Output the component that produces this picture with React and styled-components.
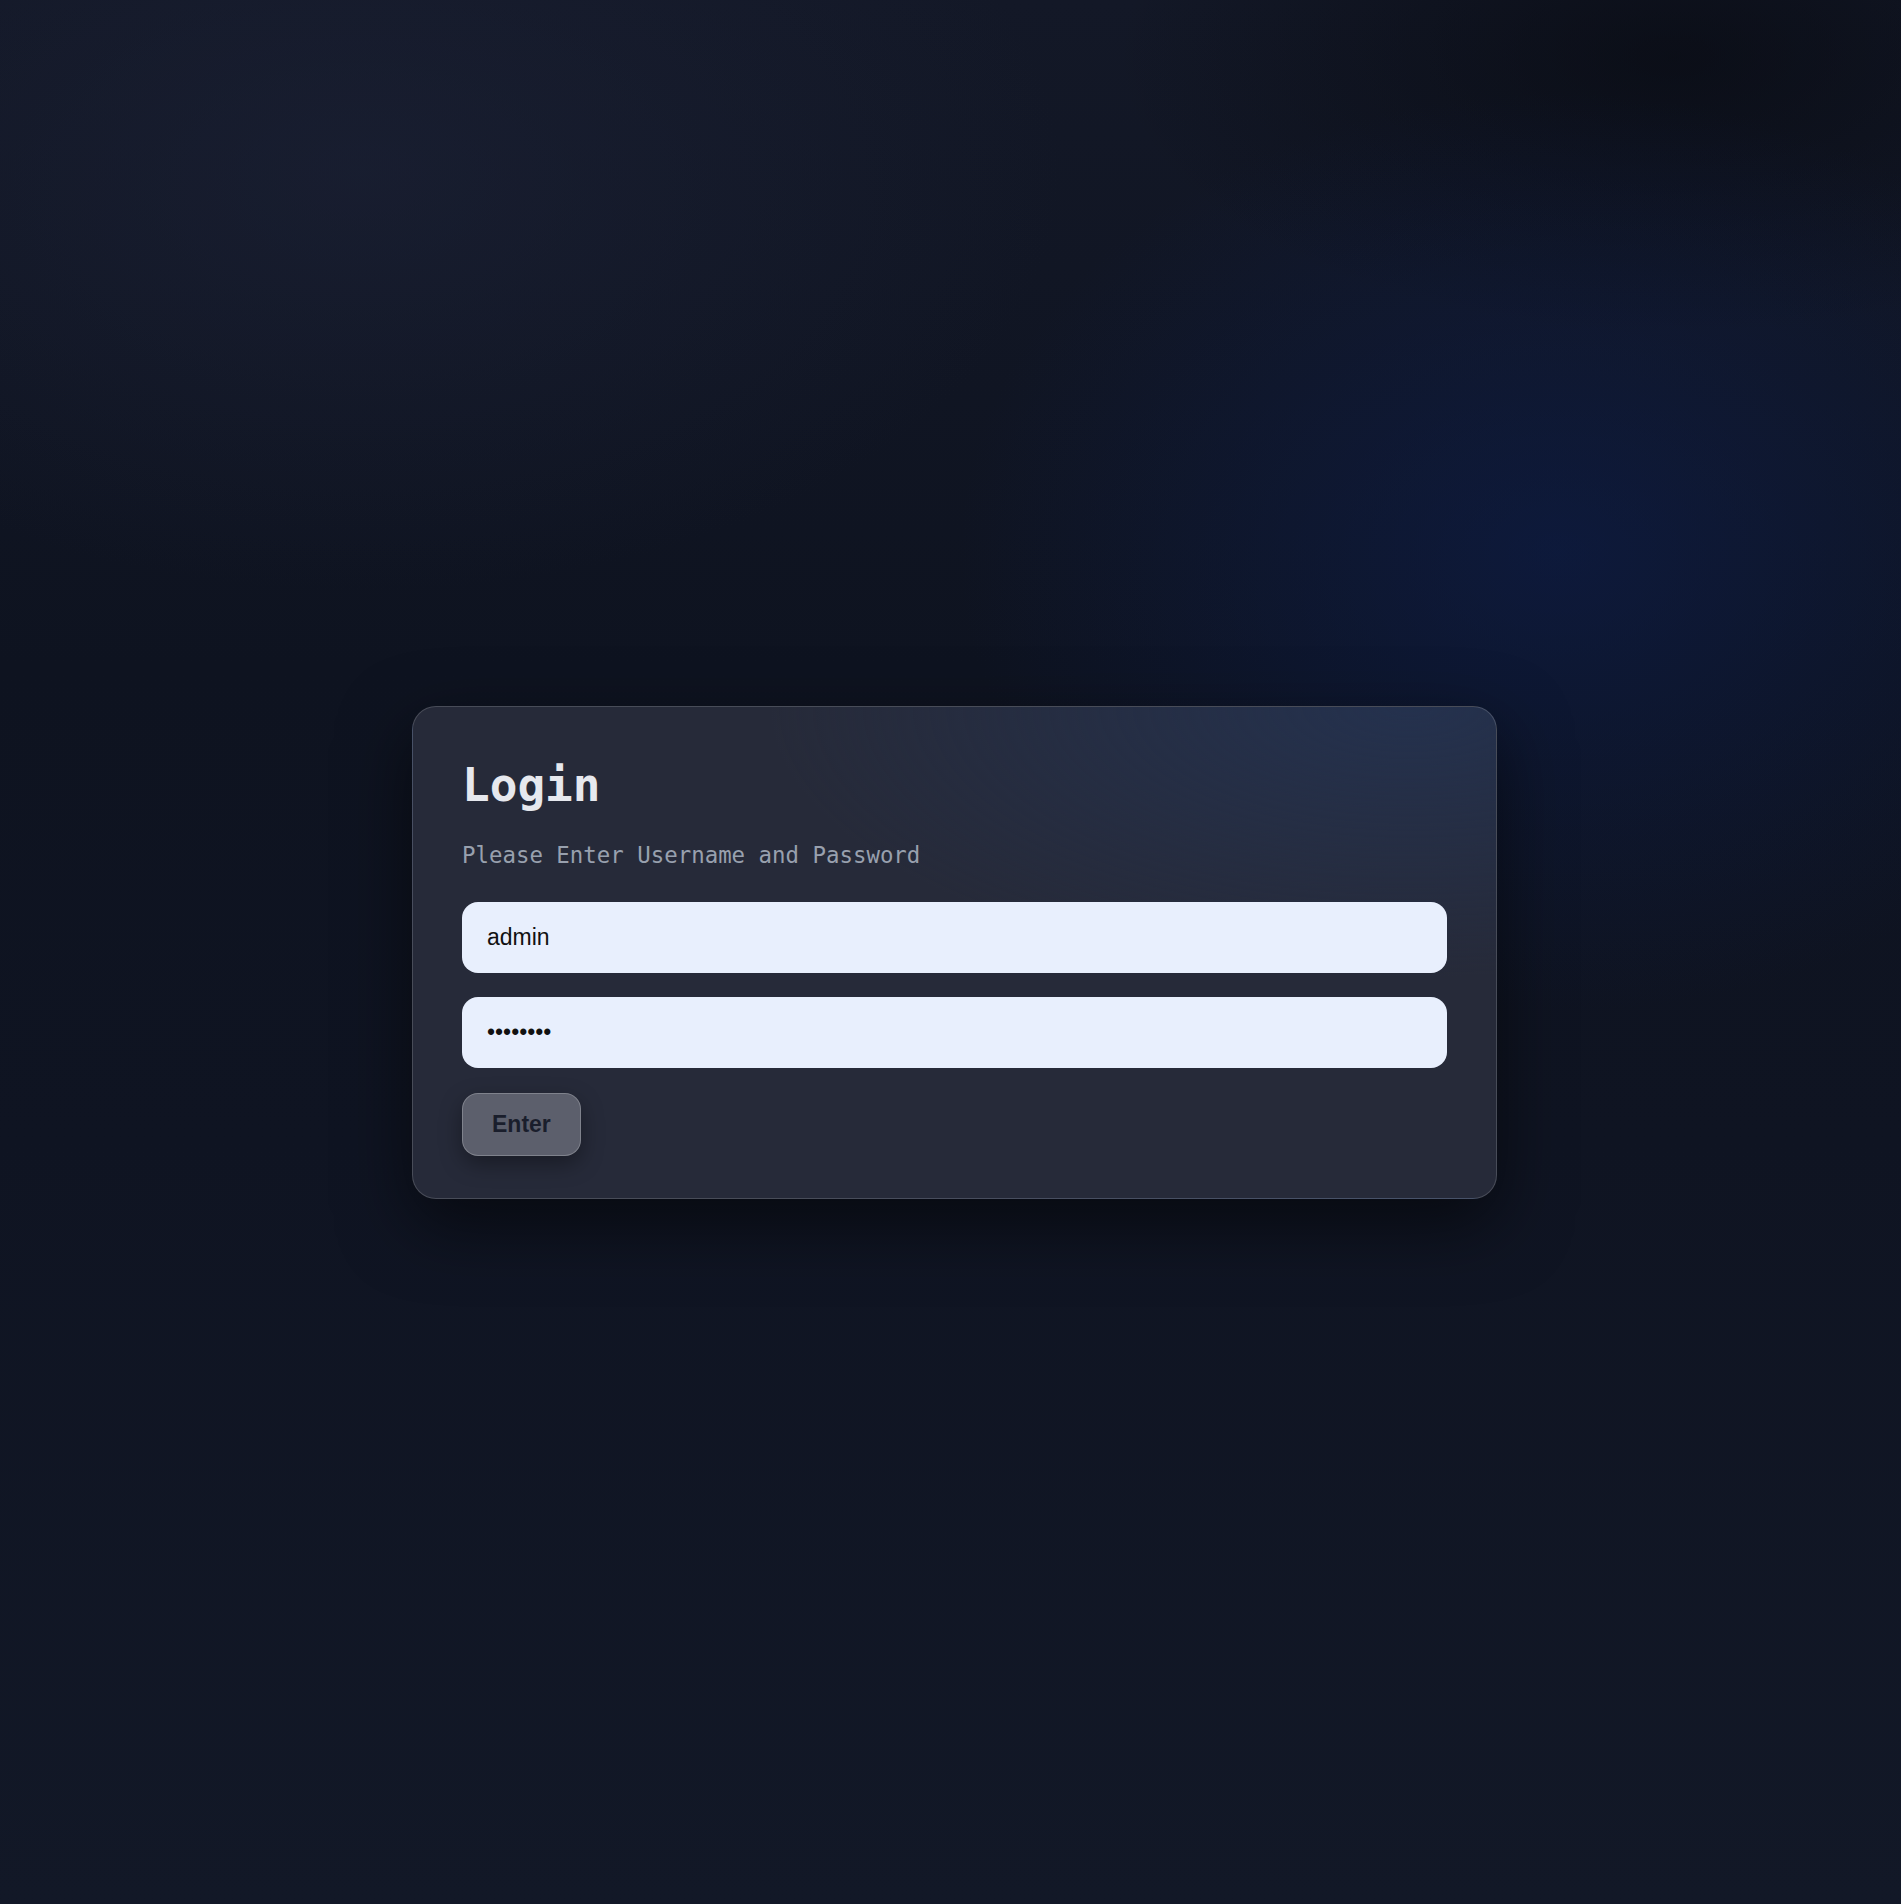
import React from "react";
import styled, { createGlobalStyle } from "styled-components";

const GlobalStyle = createGlobalStyle`
  html, body {
    margin: 0;
    padding: 0;
    height: 100%;
  }
  body {
    background: #111726;
  }
  * {
    box-sizing: border-box;
  }
`;

const Page = styled.div`
  min-height: 1904px;
  display: flex;
  align-items: center;
  justify-content: center;
  padding-left: 8px;
  background:
    radial-gradient(ellipse 600px 460px at 82% 29%, rgba(12, 30, 80, 0.55), rgba(12, 30, 80, 0) 100%),
    radial-gradient(ellipse 700px 420px at 19% 9%, rgba(30, 36, 58, 0.5), rgba(30, 36, 58, 0) 100%),
    radial-gradient(ellipse 560px 280px at 88% 3%, rgba(6, 8, 14, 0.6), rgba(6, 8, 14, 0) 100%),
    linear-gradient(180deg, #131827 0%, #0e1320 35%, #0f1422 60%, #121827 100%);
`;

const Card = styled.div`
  width: 1085px;
  padding: 51px 49px 42px;
  border-radius: 24px;
  border: 1px solid rgba(255, 255, 255, 0.16);
  background:
    radial-gradient(ellipse 640px 270px at 92% 0%, rgba(36, 50, 80, 0.9), rgba(36, 50, 80, 0) 100%),
    #262a39;
  box-shadow: 0 24px 70px rgba(0, 0, 0, 0.55);
  display: flex;
  flex-direction: column;
`;

const Title = styled.h1`
  margin: 0;
  font-family: "DejaVu Sans Mono", monospace;
  font-size: 46px;
  line-height: 54px;
  font-weight: 700;
  color: #e6e8ee;
`;

const Subtitle = styled.p`
  margin: 30px 0 0;
  font-family: "DejaVu Sans Mono", monospace;
  font-size: 22.4px;
  line-height: 26px;
  color: #98a0ae;
`;

const Form = styled.form`
  margin-top: 34px;
  display: flex;
  flex-direction: column;
  align-items: flex-start;
  gap: 24px;
`;

const Field = styled.input`
  width: 100%;
  height: 71px;
  padding: 0 25px;
  border: none;
  border-radius: 16px;
  background: #e8effd;
  color: #111111;
  font-family: "Liberation Sans", Arial, sans-serif;
  font-size: 23px;
  outline: none;
`;

const Button = styled.button`
  margin-top: 1px;
  height: 63px;
  padding: 0 29px;
  border-radius: 16px;
  border: 1px solid rgba(255, 255, 255, 0.22);
  background: #5c5f6c;
  color: #1a1e2c;
  font-family: "Liberation Sans", Arial, sans-serif;
  font-size: 23px;
  font-weight: 700;
  box-shadow: 0 8px 22px rgba(0, 0, 0, 0.35);
  cursor: pointer;
`;

export default function App() {
  return (
    <>
      <GlobalStyle />
      <Page>
        <Card>
          <Title>Login</Title>
          <Subtitle>Please Enter Username and Password</Subtitle>
          <Form onSubmit={(e) => e.preventDefault()}>
            <Field type="text" defaultValue="admin" />
            <Field type="password" defaultValue="password" />
            <Button type="submit">Enter</Button>
          </Form>
        </Card>
      </Page>
    </>
  );
}
